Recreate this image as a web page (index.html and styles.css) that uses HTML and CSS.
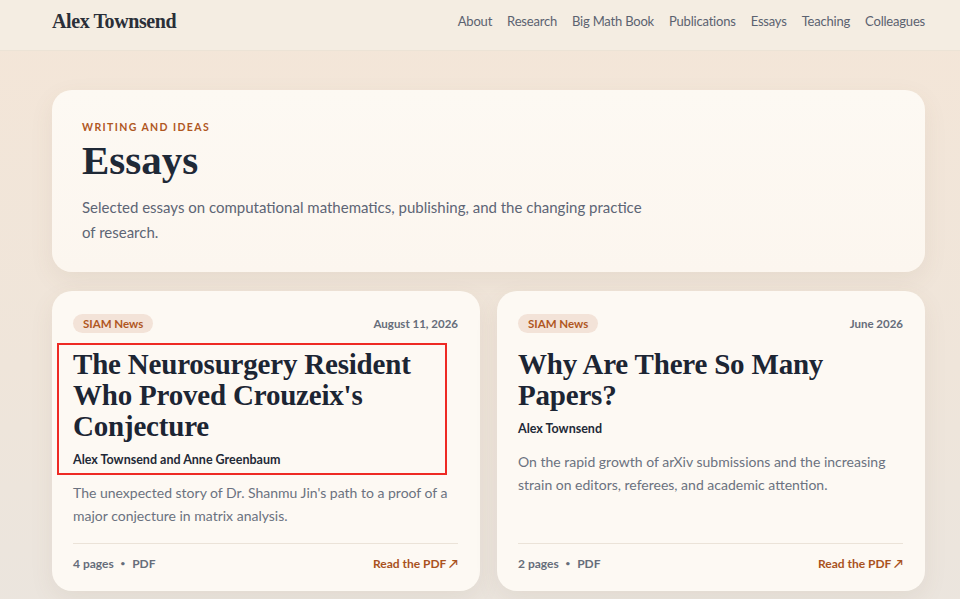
FILE: index.html
```html
<!DOCTYPE html>
<html lang="en">
<head>
  <meta charset="UTF-8" />
  <title>Essays — Alex Townsend</title>
  <link rel="stylesheet" href="styles.css">
</head>
<body>
  <header class="topbar">
    <a class="brand" href="#">Alex Townsend</a>
    <nav class="nav">
      <a href="#">About</a>
      <a href="#">Research</a>
      <a href="#">Big Math Book</a>
      <a href="#">Publications</a>
      <a href="#">Essays</a>
      <a href="#">Teaching</a>
      <a href="#">Colleagues</a>
    </nav>
  </header>

  <main class="page">
    <section class="hero">
      <p class="eyebrow">Writing and ideas</p>
      <h1>Essays</h1>
      <p class="lead">Selected essays on computational mathematics, publishing, and the changing practice of research.</p>
    </section>

    <section class="essays">
      <article class="essay">
        <div class="essay-meta">
          <span class="badge">SIAM News</span>
          <span class="date">August 11, 2026</span>
        </div>
        <div class="essay-head marked">
          <h2>The Neurosurgery Resident Who Proved Crouzeix's Conjecture</h2>
          <p class="authors">Alex Townsend and Anne Greenbaum</p>
        </div>
        <p class="summary">The unexpected story of Dr. Shanmu Jin's path to a proof of a major conjecture in matrix analysis.</p>
        <div class="essay-foot">
          <span>4 pages <span class="dot">•</span> PDF</span>
          <a href="#">Read the PDF ↗</a>
        </div>
      </article>

      <article class="essay">
        <div class="essay-meta">
          <span class="badge">SIAM News</span>
          <span class="date">June 2026</span>
        </div>
        <div class="essay-head">
          <h2>Why Are There So Many Papers?</h2>
          <p class="authors">Alex Townsend</p>
        </div>
        <p class="summary">On the rapid growth of arXiv submissions and the increasing strain on editors, referees, and academic attention.</p>
        <div class="essay-foot">
          <span>2 pages <span class="dot">•</span> PDF</span>
          <a href="#">Read the PDF ↗</a>
        </div>
      </article>
    </section>
  </main>
</body>
</html>
```

FILE: styles.css
```css
body {
  margin: 0;
  font-family: Lato, "Open Sans", sans-serif;
  color: #1f2937;
  background: linear-gradient(180deg, #f4e6d8 0%, #efe5da 60%, #ebe5de 100%);
  min-height: 100vh;
}

a {
  color: inherit;
  text-decoration: none;
}

.topbar {
  height: 42px;
  padding: 0 35px 8px 52px;
  display: flex;
  align-items: center;
  justify-content: space-between;
  background: #f4ede2;
  border-bottom: 1px solid #ece3d6;
}

.brand {
  font-family: "Liberation Serif", serif;
  font-size: 20px;
  font-weight: 600;
  color: #2a2f38;
  letter-spacing: -0.4px;
}

.nav {
  display: flex;
  gap: 15px;
  font-size: 13px;
  letter-spacing: -0.2px;
  color: #5b6270;
}

.page {
  padding: 39px 35px 20px 52px;
}

.hero {
  background: linear-gradient(180deg, #fdf9f3, #fcf6ef);
  border-radius: 20px;
  padding: 31px 30px 27px;
  box-shadow: 0 8px 24px rgba(120, 90, 60, 0.08);
}

.eyebrow {
  margin: 0;
  font-size: 10.5px;
  font-weight: 700;
  letter-spacing: 1.4px;
  text-transform: uppercase;
  color: #b0571f;
}

.hero h1 {
  margin: 3px 0 11px;
  font-family: "Liberation Serif", serif;
  font-size: 41px;
  font-weight: 600;
  line-height: 48px;
  color: #1f2937;
}

.lead {
  margin: 0;
  max-width: 575px;
  font-size: 15px;
  line-height: 25px;
  color: #5d6575;
}

.essays {
  margin-top: 19px;
  display: grid;
  grid-template-columns: 1fr 1fr;
  gap: 17px;
}

.essay {
  background: #fdf9f3;
  border-radius: 20px;
  padding: 23px 22px 20px 21px;
  height: 257px;
  display: flex;
  flex-direction: column;
  box-shadow: 0 8px 24px rgba(120, 90, 60, 0.08);
}

.essay-meta {
  display: flex;
  justify-content: space-between;
  align-items: center;
}

.badge {
  background: #f3e3d8;
  color: #b0571f;
  font-size: 11.5px;
  font-weight: 700;
  padding: 3px 10px;
  border-radius: 10px;
}

.date {
  font-size: 11.5px;
  font-weight: 700;
  color: #666d7a;
}

.essay-head {
  position: relative;
  margin-top: 16px;
}

.marked::after {
  content: "";
  position: absolute;
  top: -6px;
  left: -16px;
  right: 11px;
  bottom: -8px;
  border: 2px solid #ee2a24;
}

.essay h2 {
  margin: 0;
  font-family: "Liberation Serif", serif;
  font-size: 29px;
  font-weight: 600;
  line-height: 31px;
  letter-spacing: -0.2px;
  color: #1c2533;
}

.authors {
  margin: 10px 0 0;
  font-size: 12.5px;
  font-weight: 700;
  color: #1f2937;
}

.summary {
  margin: 14px 0 0;
  font-size: 14px;
  line-height: 23px;
  color: #6b7280;
}

.essay-foot {
  margin-top: auto;
  padding-top: 12px;
  border-top: 1px solid #ebe3d8;
  display: flex;
  justify-content: space-between;
  font-size: 12px;
  font-weight: 700;
  color: #666d7a;
}

.dot {
  margin: 0 4px;
  font-size: 8px;
  vertical-align: 2px;
}

.essay-foot a {
  color: #a9521d;
}
```
